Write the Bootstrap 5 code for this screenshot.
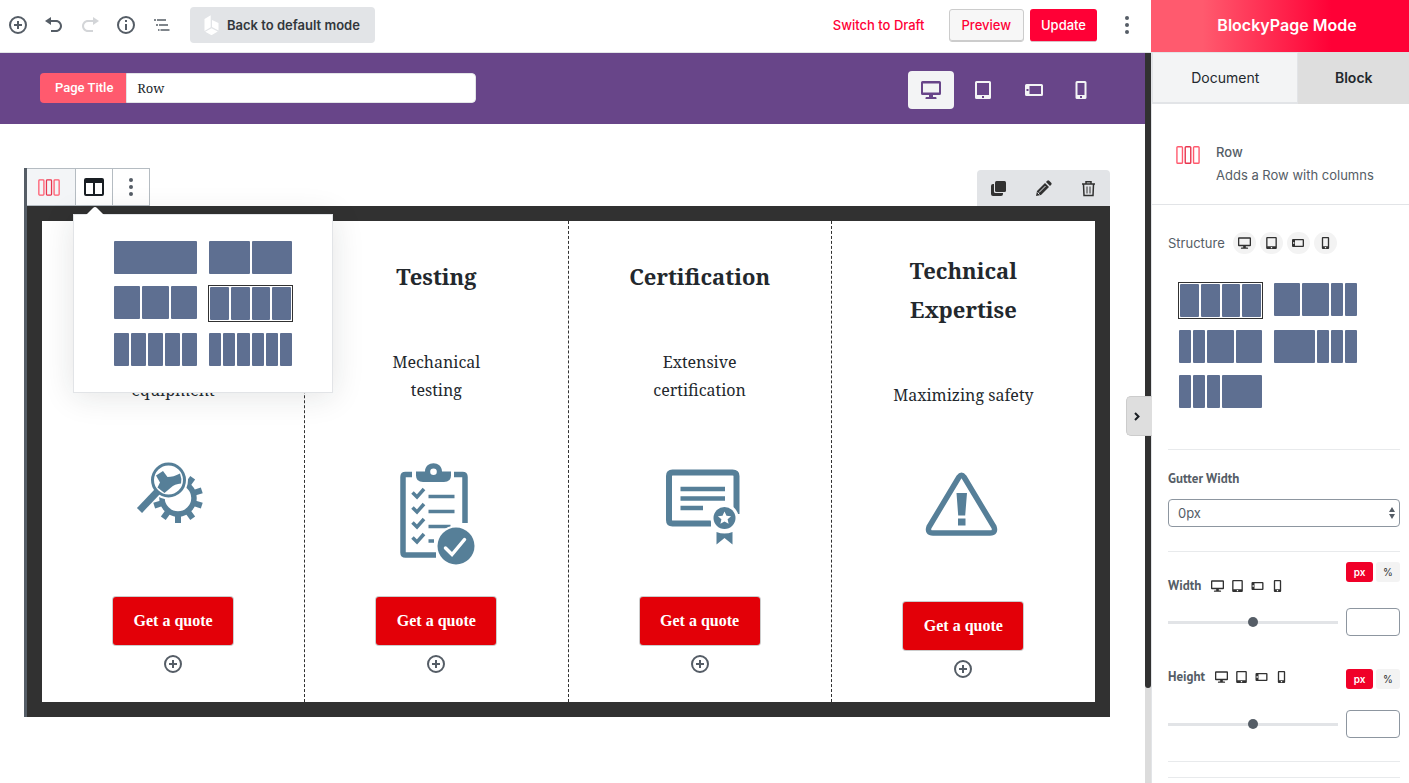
<!DOCTYPE html>
<html lang="en">
<head>
<meta charset="utf-8">
<meta name="viewport" content="width=device-width, initial-scale=1">
<title>BlockyPage Mode</title>
<link rel="stylesheet" href="https://cdn.jsdelivr.net/npm/bootstrap@5.3.0/dist/css/bootstrap.min.css">
<style>
  :root { --slate: #555d66; --ink: #23282d; --line: #e2e4e7; --red: #ff0036; --coral: #ff5a6e; --bar: #5e6f91; --art: #567f98; }
  body { font-family: "Inter", sans-serif; font-size: 13px; line-height: 20px; color: var(--slate); background: #fff; }
  button { font: inherit; border: 0; background: none; padding: 0; color: inherit; }
  svg { display: block; flex: none; }
  .serif { font-family: "Noto Serif", "DejaVu Serif Condensed", "DejaVu Serif", serif; }
  .label-face { font-family: "PT Sans", "Open Sans", sans-serif; font-weight: 700; font-size: 13px; }

  .topbar { height: 53px; padding-bottom: 2px; border-bottom: 1px solid var(--line); }
  .tool { width: 36px; height: 36px; display: flex; align-items: center; justify-content: center; }
  .more-tool { margin: 0 6px 0 12px; }
  .back-btn { height: 36px; background: var(--line); border-radius: 4px; color: #32373c; font-weight: 600; margin-left: 10px; padding: 0 15px 0 14px; }
  .draft-link { color: var(--red); text-decoration: none; font-weight: 500; }
  .top-btn { height: 33px; border-radius: 3px; font-weight: 500; }
  .preview-btn { padding: 0 12px; margin-right: 6px; color: var(--red); background: #f7f7f7; border: 1px solid #ccc; box-shadow: inset 0 -1px 0 #ccc; }
  .update-btn { padding: 0 11px; color: #fff; background: var(--red); border-bottom: 1px solid #d9c0c6; }

  .title-strip { height: 71px; background: #684589; padding: 0 45px 1px 40px; }
  .title-group { width: 436px; height: 30px; border-radius: 4px; overflow: hidden; }
  .title-group label { background: var(--coral); color: #fff; font: 500 13px/30px Roboto, sans-serif; padding: 0 13px 0 15px; }
  .title-group input { border: 1px solid var(--line); border-radius: 0 4px 4px 0; padding: 0 10px; font-size: 13px; color: var(--ink); min-width: 0; background: #fff; }
  .devices { gap: 6px; margin-top: 4px; }
  .device { height: 38px; padding: 0 13px; color: #f3f4f5; border-radius: 4px; }
  .device.on { background: #f3f4f5; color: #684589; }

  .scroll-track { width: 6px; background: #dcdcdc; }
  .scroll-thumb { height: 87%; background: #313131; border-radius: 0 0 3px 3px; }
  .canvas { padding: 44px 35px 66px 24px; }
  .row-block { border-left: 3px solid var(--slate); }
  .block-tools { height: 38px; border: 1px solid #b5bcc2; border-left: 0; }
  .block-tools > * { width: 37px; }
  .block-tools > .block-type { width: 48px; padding-right: 4px; background: #f3f5f7; }
  .block-tools > * + * { border-left: 1px solid #b5bcc2; }
  .act { height: 36px; background: var(--line); border-radius: 4px 4px 0 0; padding: 0 13px; gap: 28px; color: #313131; }
  .frame { border: 15px solid #313131; display: grid; grid-template-columns: repeat(4, 1fr); color: var(--ink); }
  .cell { padding: 30px 12px 24px; text-align: center; }
  .cell:not(:last-child) { border-right: 1px dashed #313131; }
  .cell h2 { font-size: 22px; line-height: 39px; font-weight: 700; min-height: 39px; margin: 0 0 52px; }
  .cell p { font-size: 16px; line-height: 28px; margin: 0 0 57px; }
  .cell .art { width: 80px; height: 105px; color: var(--art); margin-bottom: 31px; }
  .quote { width: 120px; height: 48px; background: #e30008; color: #fff; border-radius: 3px; font: 700 16px/48px "Liberation Serif", serif; box-shadow: 0 0 0 1px #ccc; margin-bottom: 10px; }

  .picker { position: absolute; top: 46px; left: 46px; width: 260px; padding: 25px 39px; background: #fff; border: 1px solid var(--line); box-shadow: 0 3px 30px rgba(25, 30, 35, .12); z-index: 3; }
  .picker-tip { position: absolute; left: 12px; top: -9px; z-index: 1; }
  .layouts { display: grid; grid-template-columns: 85px 85px; gap: 10px; align-items: start; }
  .lay { height: 35px; border: 1px solid transparent; display: grid; grid-template-columns: repeat(6, 1fr); gap: 2px; }
  .lay i { background: var(--bar); border-radius: 1px; }
  .lay.on { height: 37px; border-color: #313131; padding: 1px; }
  .lay .s2 { grid-column: span 2; }
  .lay .s3 { grid-column: span 3; }
  .lay .s6 { grid-column: span 6; }
  .lay.four { grid-template-columns: repeat(4, 1fr); }
  .lay.five { grid-template-columns: repeat(5, 1fr); }

  .panel-side { flex: 0 0 258px; position: relative; border-left: 1px solid var(--line); }
  .brand { height: 52px; background: linear-gradient(90deg, var(--coral) 20%, var(--red) 70%); color: #fff; font-size: 16px; font-weight: 600; margin-left: -1px; padding: 0 0 2px 14px; }
  .tabs { height: 52px; }
  .tabs button { font-size: 14px; color: var(--ink); }
  .tab-doc { flex: 0 0 57%; background: #f3f4f5; border: 1px solid var(--line) !important; border-bottom-width: 2px !important; font-weight: 400; }
  .tab-block { background: #dedede; font-weight: 600 !important; }
  .info-card { padding: 38px 24px 19px; border-bottom: 1px solid var(--line); }
  .info-card svg { margin: 3px 16px 0 0; }
  .info-card h3 { font-size: 13px; line-height: 20px; font-weight: 500; margin: 0 0 3px; }
  .sect { margin: 0 9px 0 16px; }
  .sect + .sect { border-top: 1px solid #e8eaec; }
  .structure { padding: 27px 0 40px; }
  .structure .layouts { padding: 4px 10px 0; }
  .chip { width: 23px; height: 22px; border-radius: 11px; background: #f3f3f3; display: flex; align-items: center; justify-content: center; color: #313131; }
  .mini { display: flex; align-items: center; gap: 7px; height: 16px; color: #313131; }
  .gutter { padding: 19px 0 24px; }
  .gutter label { margin-bottom: 10px; }
  .gutter-select { width: 100%; height: 28px; border: 1px solid #8d96a0; border-radius: 4px; color: var(--slate); padding: 0 9px; appearance: none;
    background: #fff url("data:image/svg+xml,%3Csvg xmlns='http://www.w3.org/2000/svg' width='6' height='12'%3E%3Cpath fill='%23555d66' d='M0 5 3 0l3 5zM0 7h6L3 12z'/%3E%3C/svg%3E") no-repeat right 4px center; }
  .sizes { padding: 10px 0 23px; }
  .size-head { height: 46px; }
  .size-head.tight { height: 41px; margin-top: 33px; }
  .size-name { gap: 10px; line-height: 16px; }
  .units { gap: 3px; }
  .unit { height: 20px; border-radius: 3px; background: #f3f3f3; width: 24px; font-size: 10px !important; color: #313131 !important; }
  .unit.on { width: 27px; background: #f00028; color: #fff !important; font-weight: 600; }
  .size-range { flex: 1; min-width: 0; height: 10px; margin: 0; appearance: none; background: linear-gradient(var(--line), var(--line)) center / 100% 3px no-repeat; }
  .size-range::-webkit-slider-thumb { appearance: none; width: 10px; height: 10px; border-radius: 50%; background: var(--slate); }
  .size-input { width: 54px; height: 28px; border: 1px solid #8d96a0; border-radius: 4px; background: #fff; }
  .spacer { height: 16px; }
  .collapse-tab { position: absolute; left: -26px; top: 396px; width: 26px; height: 40px; padding-right: 6px; background: #dedede; border: 1px solid #ccc; border-right: 0; border-radius: 5px 0 0 5px; z-index: 4; color: #191e23; }
</style>
<script src="https://cdn.jsdelivr.net/npm/bootstrap@5.3.0/dist/js/bootstrap.bundle.min.js"></script>
</head>
<body>
<svg width="0" height="0" class="position-absolute" aria-hidden="true">
  <symbol id="desktop" viewBox="0 0 20 18"><path fill="currentColor" fill-rule="evenodd" d="M1.500 0h17A1.500 1.500 0 0 1 20 1.500v11a1.500 1.500 0 0 1-1.500 1.500H12v2h2.500a1 1 0 0 1 1 1v1h-11v-1a1 1 0 0 1 1-1H8v-2H1.500A1.500 1.500 0 0 1 0 12.500v-11A1.500 1.500 0 0 1 1.500 0zM2 2.500v9h16v-9z"/></symbol>
  <symbol id="tablet" viewBox="0 0 16 18"><path fill="currentColor" fill-rule="evenodd" d="M1.500 0h13A1.500 1.500 0 0 1 16 1.500v15a1.500 1.500 0 0 1-1.500 1.500h-13A1.500 1.500 0 0 1 0 16.500v-15A1.500 1.500 0 0 1 1.500 0zM2 2v12h12V2zm5 13v2h2v-2z"/></symbol>
  <symbol id="landscape" viewBox="0 0 18 12"><path fill="currentColor" fill-rule="evenodd" d="M1.500 0h15A1.500 1.500 0 0 1 18 1.500v9a1.500 1.500 0 0 1-1.500 1.500h-15A1.500 1.500 0 0 1 0 10.500v-9A1.500 1.500 0 0 1 1.500 0zM4.500 2v8H16V2zM1.500 5v2h2V5z"/></symbol>
  <symbol id="phone" viewBox="0 0 12 18"><path fill="currentColor" fill-rule="evenodd" d="M2 0h8a1.500 1.500 0 0 1 1.500 1.500v15A1.500 1.500 0 0 1 10 18H2a1.500 1.500 0 0 1-1.500-1.500v-15A1.500 1.500 0 0 1 2 0zm.5 2v12h7V2zM5 15v2h2v-2z"/></symbol>
  <symbol id="plus" viewBox="0 0 20 20"><circle cx="10" cy="10" r="8" fill="none" stroke="currentColor" stroke-width="2"/><path d="M10 6v8M6 10h8" stroke="currentColor" stroke-width="2"/></symbol>
  <symbol id="dots" viewBox="0 0 4 20"><g fill="currentColor"><circle cx="2" cy="3" r="2"/><circle cx="2" cy="10" r="2"/><circle cx="2" cy="17" r="2"/></g></symbol>
  <symbol id="rowicon" viewBox="0 0 26 20"><g fill="none" stroke="#ff5a6e" stroke-width="1.500"><rect x="1" y="1" width="6" height="18" rx="1"/><rect x="10" y="1" width="6" height="18" rx="1" stroke="#e8354f"/><rect x="19" y="1" width="6" height="18" rx="1"/></g></symbol>
</svg>

<div class="d-flex vh-100 overflow-hidden">
  <div class="d-flex flex-column flex-grow-1">
    <header class="topbar d-flex align-items-center flex-shrink-0">
      <button class="tool" aria-label="Add block"><svg width="20" height="20"><use href="#plus"/></svg></button>
      <button class="tool" aria-label="Undo"><svg width="20" height="20" viewBox="0 0 20 20"><path fill="currentColor" d="M12 5H7V2L1 6l6 4V7h5c2.200 0 4 1.800 4 4s-1.800 4-4 4H7v2h5c3.300 0 6-2.700 6-6s-2.700-6-6-6z"/></svg></button>
      <button class="tool opacity-25" aria-label="Redo"><svg width="20" height="20" viewBox="0 0 20 20"><path fill="currentColor" d="M8 5h5V2l6 4-6 4V7H8c-2.200 0-4 1.800-4 4s1.800 4 4 4h5v2H8c-3.300 0-6-2.700-6-6s2.700-6 6-6z"/></svg></button>
      <button class="tool" aria-label="Content structure"><svg width="20" height="20" viewBox="0 0 20 20"><circle cx="10" cy="10" r="8" fill="none" stroke="currentColor" stroke-width="2"/><path d="M10 5v2M10 9v6" stroke="currentColor" stroke-width="2"/></svg></button>
      <button class="tool" aria-label="Block navigation"><svg width="20" height="20" viewBox="0 0 20 20"><path d="M2 5h2M5 5h9M4 10h2M7 10h9M6 15h1.500M8.500 15h9" stroke="currentColor" stroke-width="1.600"/></svg></button>
      <button class="back-btn d-flex align-items-center gap-2"><svg width="15" height="20" viewBox="0 0 15 20"><path fill="#fff" d="M.5 4 6.700.3v12L.5 16zM8 5l6.500 3v7.500L8 12zM1.200 16.800l6.300-3.600 6.300 3.400-6.300 3.600z"/></svg>Back to default mode</button>
      <div class="d-flex align-items-center ms-auto">
        <a href="#" class="draft-link me-4">Switch to Draft</a>
        <button class="top-btn preview-btn">Preview</button>
        <button class="top-btn update-btn">Update</button>
        <button class="tool more-tool" aria-label="More"><svg width="4" height="20"><use href="#dots"/></svg></button>
      </div>
    </header>

    <div class="d-flex flex-grow-1 overflow-hidden">
      <main class="flex-grow-1">
        <div class="title-strip d-flex align-items-center justify-content-between">
          <div class="title-group d-flex">
            <label for="page-title">Page Title</label>
            <input id="page-title" class="serif flex-grow-1" value="Row">
          </div>
          <div class="devices d-flex">
            <button class="device on" aria-label="Desktop"><svg width="20" height="18"><use href="#desktop"/></svg></button>
            <button class="device" aria-label="Tablet"><svg width="20" height="18"><use href="#tablet"/></svg></button>
            <button class="device" aria-label="Phone landscape"><svg width="18" height="12"><use href="#landscape"/></svg></button>
            <button class="device" aria-label="Phone"><svg width="12" height="18"><use href="#phone"/></svg></button>
          </div>
        </div>

        <div class="canvas">
          <section class="row-block position-relative">
            <div class="d-flex justify-content-between align-items-end">
              <div class="block-tools d-flex">
                <button class="block-type d-flex align-items-center justify-content-center" aria-label="Row"><svg width="22" height="17"><use href="#rowicon"/></svg></button>
                <button class="tool h-100" aria-label="Columns"><svg width="20" height="18" viewBox="0 0 20 18"><path fill="#191e23" fill-rule="evenodd" d="M2 0h16a2 2 0 0 1 2 2v14a2 2 0 0 1-2 2H2a2 2 0 0 1-2-2V2a2 2 0 0 1 2-2zm0 5v11h7V5zm9 0v11h7V5z"/></svg></button>
                <button class="tool h-100" aria-label="More options"><svg width="4" height="20"><use href="#dots"/></svg></button>
              </div>
              <div class="act d-flex align-items-center">
                <button aria-label="Duplicate"><svg width="17" height="17" viewBox="0 0 17 17"><rect x="5" y="1" width="11" height="11" rx="1.500" fill="currentColor"/><path fill="currentColor" d="M1 6a2 2 0 0 1 2-2h1v7.500A1.500 1.500 0 0 0 5.500 13H13v1a2 2 0 0 1-2 2H3a2 2 0 0 1-2-2z"/></svg></button>
                <button aria-label="Edit"><svg width="17" height="17" viewBox="0 0 17 17"><path fill="currentColor" d="M1 16l1-5 8-8 4 4-8 8zM11 2l1.200-1.200a1.500 1.500 0 0 1 2 0l2 2a1.500 1.500 0 0 1 0 2L15 6z"/><path d="M4 12.500 10.500 6" stroke="#e2e4e7"/><path d="m2.500 12.500 2 2" stroke="#e2e4e7"/></svg></button>
                <button aria-label="Delete"><svg width="17" height="17" viewBox="0 0 17 17"><path fill="none" stroke="currentColor" stroke-width="1.500" d="M2 4h13M6 3.500V1.700h5v1.800M3.500 4.500l.5 11h9l.5-11"/><path stroke="currentColor" d="M7 6.500v7M10 6.500v7"/></svg></button>
              </div>
            </div>

            <div class="frame serif">
              <div class="cell d-flex flex-column align-items-center justify-content-center">
                <h2></h2>
                <p><br>equipment</p>
                <svg class="art" viewBox="0 0 80 105">
                  <g fill="currentColor" transform="translate(45 37)"><circle r="16" fill="none" stroke="currentColor" stroke-width="5.500"/>
                    <path id="tooth" d="M-3 17h6v8h-6z"/><use href="#tooth" transform="rotate(36)"/><use href="#tooth" transform="rotate(72)"/><use href="#tooth" transform="rotate(-36)"/><use href="#tooth" transform="rotate(-72)"/><use href="#tooth" transform="rotate(-108)"/><use href="#tooth" transform="rotate(-144)"/></g>
                  <circle cx="35.500" cy="19" r="19.500" fill="#fff"/>
                  <path d="M25 30 6.500 49.500" stroke="currentColor" stroke-width="7"/>
                  <circle cx="35.500" cy="19" r="16" fill="#fff" stroke="currentColor" stroke-width="3"/>
                  <path fill="currentColor" d="m23 14.500 7-4.500 4.500 6c4 0 8-1 12.500-3.500q2 5 1 10c-4 .5-8 1.500-10 4L31.500 32l-7-5.500 2.500-5z"/>
                </svg>
                <button class="quote">Get a quote</button>
                <svg width="20" height="18" color="#555d66" viewBox="0 0 20 18"><use href="#plus" y="-1" width="20" height="20"/></svg>
              </div>
              <div class="cell d-flex flex-column align-items-center justify-content-center">
                <h2>Testing</h2>
                <p>Mechanical<br>testing</p>
                <svg class="art" viewBox="0 0 80 105">
                  <path fill="none" stroke="currentColor" stroke-width="5.500" d="M16 13.500H9.500Q7 13.500 7 16v75.500Q7 94 9.500 94H40M58 13.500h8.500q2.500 0 2.500 2.500v46"/>
                  <path fill="currentColor" fill-rule="evenodd" d="M20 10.500h9c0-11 17-11 17 0h9v4q0 6.500-7 6.500H27q-7 0-7-6.500zm17.500-3a3.300 3.300 0 1 0 0 6.600 3.300 3.300 0 0 0 0-6.600z"/>
                  <path d="M32.500 35.500h26M32.500 50.500h26M32.500 65.500h22M32.500 80h5.500" stroke="currentColor" stroke-width="3.500"/>
                  <path fill="none" stroke="currentColor" stroke-width="3.500" d="m16.500 31.500 4.500 4.500 7-8M16.500 46.500l4.500 4.500 7-8M16.500 61.500l4.500 4.500 7-8M16.500 76.500l4.500 4.500 7-8"/>
                  <circle cx="60" cy="85" r="20.500" fill="#fff"/><circle cx="60" cy="85" r="18.500" fill="currentColor"/>
                  <path fill="none" stroke="#fff" stroke-width="3.500" stroke-linecap="round" d="m49.500 87 6.500 6.500 12.500-15"/>
                </svg>
                <button class="quote">Get a quote</button>
                <svg width="20" height="18" color="#555d66" viewBox="0 0 20 18"><use href="#plus" y="-1" width="20" height="20"/></svg>
              </div>
              <div class="cell d-flex flex-column align-items-center justify-content-center">
                <h2>Certification</h2>
                <p>Extensive<br>certification</p>
                <svg class="art" viewBox="0 0 80 105">
                  <path fill="none" stroke="currentColor" stroke-width="6" d="M51 62.500H12.500q-3.500 0-3.500-3.500V15q0-3.500 3.500-3.500h60q4 0 4 3.500v38"/>
                  <path d="M20.500 28H65M20.500 37.500H65M20.500 47h22.500" stroke="currentColor" stroke-width="4.500"/>
                  <circle cx="64.500" cy="57" r="14" fill="#fff"/><circle cx="64.500" cy="57" r="11" fill="currentColor"/>
                  <path fill="#fff" d="m64.500 50.500 2 4.200 4.600.5-3.500 3 1 4.600-4.100-2.400-4.100 2.400 1-4.600-3.500-3 4.600-.5z"/>
                  <path fill="currentColor" d="M56.500 71q8 3 16 0v12.500l-8-6.500-8 6.500z"/>
                </svg>
                <button class="quote">Get a quote</button>
                <svg width="20" height="18" color="#555d66" viewBox="0 0 20 18"><use href="#plus" y="-1" width="20" height="20"/></svg>
              </div>
              <div class="cell d-flex flex-column align-items-center justify-content-center">
                <h2>Technical<br>Expertise</h2>
                <p>Maximizing safety</p>
                <svg class="art" viewBox="0 0 80 105">
                  <path fill="none" stroke="currentColor" stroke-width="5.500" stroke-linejoin="round" d="M36 11q2.500-3.500 5 0l30 50q2 6-4 6H10q-6 0-4-6z"/>
                  <path fill="currentColor" d="M33.500 27H44l-1.800 22.500h-7zM35 52.500h7.500v7H35z"/>
                </svg>
                <button class="quote">Get a quote</button>
                <svg width="20" height="18" color="#555d66" viewBox="0 0 20 18"><use href="#plus" y="-1" width="20" height="20"/></svg>
              </div>
            </div>

            <div class="picker">
              <svg class="picker-tip" width="18" height="10" viewBox="0 0 18 10"><path fill="#fff" d="M0 9 7 2q2-2 4 0l7 7v1H0z"/></svg>
              <div class="layouts">
                <button class="lay" aria-label="One column"><i class="s6"></i></button>
                <button class="lay" aria-label="Two columns"><i class="s3"></i><i class="s3"></i></button>
                <button class="lay" aria-label="Three columns"><i class="s2"></i><i class="s2"></i><i class="s2"></i></button>
                <button class="lay four on" aria-label="Four columns"><i></i><i></i><i></i><i></i></button>
                <button class="lay five" aria-label="Five columns"><i></i><i></i><i></i><i></i><i></i></button>
                <button class="lay" aria-label="Six columns"><i></i><i></i><i></i><i></i><i></i><i></i></button>
              </div>
            </div>
          </section>
        </div>
      </main>
      <div class="scroll-track flex-shrink-0"><div class="scroll-thumb"></div></div>
    </div>
  </div>

  <aside class="panel-side">
    <button class="collapse-tab d-flex align-items-center justify-content-center" aria-label="Collapse sidebar"><svg width="6" height="9" viewBox="0 0 6 9"><path d="m1 1 3.500 3.500L1 8" fill="none" stroke="currentColor" stroke-width="2"/></svg></button>
    <div class="brand d-flex align-items-center justify-content-center">BlockyPage Mode</div>
    <div class="tabs d-flex">
      <button class="tab-doc">Document</button>
      <button class="tab-block flex-grow-1">Block</button>
    </div>
    <div class="info-card d-flex">
      <svg width="24" height="20"><use href="#rowicon"/></svg>
      <div><h3>Row</h3>Adds a Row with columns</div>
    </div>

    <div class="sect structure">
      <div class="d-flex align-items-center gap-1 mb-4">
        <span class="me-1">Structure</span>
        <button class="chip" aria-label="Desktop"><svg width="13" height="12"><use href="#desktop"/></svg></button>
        <button class="chip" aria-label="Tablet"><svg width="11" height="12"><use href="#tablet"/></svg></button>
        <button class="chip" aria-label="Phone landscape"><svg width="12" height="8"><use href="#landscape"/></svg></button>
        <button class="chip" aria-label="Phone"><svg width="9" height="12"><use href="#phone"/></svg></button>
      </div>
      <div class="layouts">
        <button class="lay four on" aria-label="Equal"><i></i><i></i><i></i><i></i></button>
        <button class="lay" aria-label="Left two wide"><i class="s2"></i><i class="s2"></i><i></i><i></i></button>
        <button class="lay" aria-label="Right two wide"><i></i><i></i><i class="s2"></i><i class="s2"></i></button>
        <button class="lay" aria-label="Left wide"><i class="s3"></i><i></i><i></i><i></i></button>
        <button class="lay" aria-label="Right wide"><i></i><i></i><i></i><i class="s3"></i></button>
      </div>
    </div>

    <div class="sect gutter">
      <label class="label-face d-block" for="gutter">Gutter Width</label>
      <select id="gutter" class="gutter-select"><option>0px</option></select>
    </div>

    <div class="sect sizes">
      <div class="size-head d-flex justify-content-between">
        <div class="size-name d-flex mt-3">
          <label class="label-face" for="width-range">Width</label>
          <div class="mini">
            <svg width="13" height="12"><use href="#desktop"/></svg><svg width="13" height="12"><use href="#tablet"/></svg><svg width="13" height="8"><use href="#landscape"/></svg><svg width="13" height="12"><use href="#phone"/></svg>
          </div>
        </div>
        <div class="units d-flex align-items-start"><button class="unit on">px</button><button class="unit">%</button></div>
      </div>
      <div class="d-flex align-items-center gap-2">
        <input id="width-range" class="size-range" type="range"><input class="size-input" type="text" aria-label="Width value">
      </div>
      <div class="size-head tight d-flex justify-content-between">
        <div class="size-name d-flex">
          <label class="label-face" for="height-range">Height</label>
          <div class="mini">
            <svg width="13" height="12"><use href="#desktop"/></svg><svg width="13" height="12"><use href="#tablet"/></svg><svg width="13" height="8"><use href="#landscape"/></svg><svg width="13" height="12"><use href="#phone"/></svg>
          </div>
        </div>
        <div class="units d-flex align-items-start"><button class="unit on">px</button><button class="unit">%</button></div>
      </div>
      <div class="d-flex align-items-center gap-2">
        <input id="height-range" class="size-range" type="range"><input class="size-input" type="text" aria-label="Height value">
      </div>
    </div>
    <div class="sect spacer"></div>
    <div class="sect"></div>
  </aside>
</div>
</body>
</html>
